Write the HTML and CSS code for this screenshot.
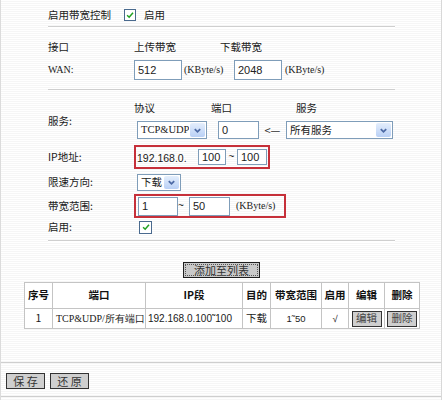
FILE: index.html
```html
<!DOCTYPE html>
<html>
<head>
<meta charset="utf-8">
<link rel="stylesheet" href="styles.css">
</head>
<body>
<div class="page">
  <div class="form">
    <div class="row r-enable">
      <span class="txt">启用带宽控制</span>
      <span class="chk chk-top"><svg viewBox="0 0 12 12" width="10" height="10"><path d="M2.5 6.2 L5 8.6 L9.6 3.2" fill="none" stroke="#21a121" stroke-width="1.8"/></svg></span>
      <span class="txt">启用</span>
    </div>
    <div class="sep s1"></div>
    <div class="row r-head">
      <span class="lbl">接口</span>
      <span class="txt c-up">上传带宽</span>
      <span class="txt">下载带宽</span>
    </div>
    <div class="row r-wan">
      <span class="lbl small">WAN:</span>
      <span class="inp w-bw">512</span>
      <span class="small unit">(KByte/s)</span>
      <span class="inp w-bw">2048</span>
      <span class="small unit2">(KByte/s)</span>
    </div>
    <div class="sep s2"></div>
    <div class="svc">
      <span class="lbl">服务:</span>
      <div class="svc-body">
        <div class="row r-phead">
          <span class="txt c-proto">协议</span>
          <span class="txt c-port">端口</span>
          <span class="txt">服务</span>
        </div>
        <div class="row r-psel">
          <div class="sel w-proto"><span class="sel-t serif">TCP&amp;UDP</span><span class="sel-b"><svg viewBox="0 0 10 10" width="9" height="9"><path d="M2 3.5 L5 6.5 L8 3.5" fill="none" stroke="#4d6aa5" stroke-width="2"/></svg></span></div>
          <span class="inp w-port">0</span>
          <span class="arrow">&lt;—</span>
          <div class="sel w-svc"><span class="sel-t">所有服务</span><span class="sel-b"><svg viewBox="0 0 10 10" width="9" height="9"><path d="M2 3.5 L5 6.5 L8 3.5" fill="none" stroke="#4d6aa5" stroke-width="2"/></svg></span></div>
        </div>
      </div>
    </div>
    <div class="row r-ip">
      <span class="lbl">IP地址:</span>
      <div class="redbox rb-ip">
        <span class="ipfix">192.168.0.</span>
        <span class="inp w-ip1">100</span>
        <span class="tilde">~</span>
        <span class="inp w-ip2">100</span>
      </div>
    </div>
    <div class="row r-dir">
      <span class="lbl">限速方向:</span>
      <div class="sel w-dir"><span class="sel-t">下载</span><span class="sel-b"><svg viewBox="0 0 10 10" width="9" height="9"><path d="M2 3.5 L5 6.5 L8 3.5" fill="none" stroke="#4d6aa5" stroke-width="2"/></svg></span></div>
    </div>
    <div class="row r-bw">
      <span class="lbl">带宽范围:</span>
      <div class="redbox rb-bw">
        <span class="inp w-r1">1</span>
        <span class="tilde2">~</span>
        <span class="inp w-r2">50</span>
        <span class="small unit3">(KByte/s)</span>
      </div>
    </div>
    <div class="row r-en">
      <span class="lbl">启用:</span>
      <span class="chk chk-en"><svg viewBox="0 0 12 12" width="10" height="10"><path d="M2.5 6.2 L5 8.6 L9.6 3.2" fill="none" stroke="#21a121" stroke-width="1.8"/></svg></span>
    </div>
    <div class="sep s3"></div>
  </div>
  <div class="addbar"><span class="btn-add">添加至列表</span></div>
  <table class="list">
    <colgroup>
      <col class="k1"><col class="k2"><col class="k3"><col class="k4"><col class="k5"><col class="k6"><col class="k7"><col class="k8">
    </colgroup>
    <tr class="hd">
      <th>序号</th><th>端口</th><th>IP段</th><th>目的</th><th>带宽范围</th><th>启用</th><th>编辑</th><th>删除</th>
    </tr>
    <tr class="dt">
      <td>1</td><td class="serif l">TCP&amp;UDP/所有端口</td><td class="ipc">192.168.0.100˜100</td><td>下载</td><td class="sm">1˜50</td><td class="sm">√</td><td><span class="tbtn">编辑</span></td><td><span class="tbtn">删除</span></td>
    </tr>
  </table>
  <div class="footer">
    <span class="fbtn">保 存</span>
    <span class="fbtn">还 原</span>
  </div>
</div>
</body>
</html>
```
FILE: styles.css
```css
* { box-sizing: border-box; }
html, body { margin: 0; padding: 0; }
body {
  font-family: "Noto Sans CJK SC", "Liberation Sans", sans-serif;
  font-size: 10.5px;
  color: #1a1a1a;
  line-height: 1;
}
.page {
  width: 442px;
  height: 400px;
  position: relative;
  background: repeating-linear-gradient(#ffffff 0, #ffffff 1px, #f6f6f6 1px, #f6f6f6 2px);
  border-left: 1px solid #dcdcdc;
  border-right: 1px solid #d8d8d8;
  overflow: hidden;
}
.form { padding: 6px 0 0 47px; }
.row { display: flex; align-items: center; }
.lbl { width: 86px; flex: none; }
.small { font-family: "Liberation Serif", serif; font-size: 10px; }
.serif { font-family: "Liberation Serif", serif; font-size: 10.5px; }
.r-enable { height: 18px; }
.chk {
  display: inline-flex; align-items: center; justify-content: center;
  width: 12px; height: 12px; background: #fff;
  border: 1px solid #4a6a8e;
}
.chk-top { margin: 0 8px 0 13px; }
.sep {
  width: 347px; height: 2px;
  border-top: 1px solid #cfcfcf; border-bottom: 1px solid #ffffff;
}
.s1 { margin-top: 2px; }
.r-head { margin-top: 10px; height: 18px; }
.c-up { width: 86px; }
.r-wan { margin-top: 3px; height: 22px; }
.inp {
  display: inline-flex; align-items: center;
  background: #fff; border: 1px solid #7f9db9;
  font-family: "Liberation Sans", sans-serif; font-size: 11px;
  padding-left: 3px; color: #222;
}
.w-bw { width: 48px; height: 20px; }
.unit { width: 52px; padding-left: 2px; }
.unit2 { padding-left: 3px; }
.s2 { margin-top: 8px; }
.svc { display: flex; align-items: center; margin-top: 8px; }
.svc .lbl { padding-top: 3px; }
.r-phead { height: 18px; }
.c-proto { width: 77px; }
.c-port { width: 85px; }
.r-psel { margin-top: 3px; height: 20px; }
.sel {
  display: flex; align-items: stretch;
  background: #fff; border: 1px solid #7f9db9; height: 18px;
}
.sel-t { flex: 1; display: flex; align-items: center; padding-left: 3px; white-space: nowrap; overflow: hidden; }
.sel-b {
  width: 15px; flex: none; margin: 1px;
  background: linear-gradient(#e4eefc, #b9d0f5);
  border-radius: 2px;
  display: flex; align-items: center; justify-content: center;
}
.w-proto { width: 70px; margin-left: 3px; }
.w-port { width: 41px; height: 18px; margin-left: 11px; }
.arrow { width: 27px; text-align: center; font-size: 11px; color: #333; }
.w-svc { width: 107px; }
.r-ip { margin-top: 5px; height: 24px; }
.redbox {
  display: flex; align-items: center; height: 24px;
  border: 2px solid #c6303a;
}
.rb-ip { width: 136px; padding-left: 1px; }
.ipfix { font-family: "Liberation Sans", sans-serif; font-size: 10.5px; width: 61px; padding-top: 2px; }
.w-ip1 { width: 28px; height: 16px; }
.tilde { width: 11px; text-align: center; font-family: "Liberation Sans", sans-serif; font-size: 10px; }
.w-ip2 { width: 30px; height: 16px; }
.r-dir { margin-top: 3px; height: 20px; }
.w-dir { width: 44px; height: 17px; margin-left: 3px; }
.r-bw { margin-top: 2px; height: 24px; }
.rb-bw { width: 152px; padding-left: 2px; }
.w-r1 { width: 40px; height: 19px; }
.tilde2 { width: 11px; font-size: 10px; font-family: "Liberation Sans", sans-serif; }
.w-r2 { width: 41px; height: 19px; }
.unit3 { padding-left: 6px; }
.r-en { margin-top: 1px; height: 16px; }
.chk-en { margin-left: 5px; width: 13px; height: 13px; }
.s3 { margin-top: 5px; }
.addbar { margin-top: 20px; padding-left: 182px; height: 16px; }
.btn-add {
  display: inline-flex; align-items: center; justify-content: center;
  width: 77px; height: 16px;
  background: #c9c9c9;
  border: 1px solid #1e1e1e;
  outline: 1px dotted #555; outline-offset: -3px;
  font-size: 11px; color: #333;
}
.list {
  margin-top: 4px; margin-left: 23px;
  width: 395px; border-collapse: collapse;
  table-layout: fixed; background: #fff;
}
.k1 { width: 28px; } .k2 { width: 93px; } .k3 { width: 97px; } .k4 { width: 28px; }
.k5 { width: 51px; } .k6 { width: 27px; } .k7 { width: 36px; } .k8 { width: 35px; }
.list th, .list td {
  border: 1px solid #c4c4c4; padding: 0; text-align: center;
  white-space: nowrap; overflow: hidden;
}
.list th { font-weight: bold; font-size: 10.5px; color: #111; }
.hd { height: 26px; }
.dt { height: 20px; }
.list td { font-size: 10.5px; }
.list td.l { text-align: left; padding-left: 3px; font-size: 10px; }
.list td.ipc { font-family: "Liberation Sans", sans-serif; font-size: 10px; text-align: left; padding-left: 2px; }
.list td.sm { font-family: "Liberation Sans", sans-serif; font-size: 9.5px; }
.tbtn {
  display: inline-flex; align-items: center; justify-content: center;
  width: 30px; height: 16px; background: #cfcfcf;
  border: 1px solid #333; font-size: 10.5px; color: #444;
}
.footer {
  margin-top: 33px; border-top: 1px solid #cfcfcf;
  padding: 10px 0 0 5px; display: flex; gap: 5px;
  height: 35px; border-bottom: 1px solid #cfcfcf;
}
.fbtn {
  display: inline-flex; align-items: center; justify-content: center;
  width: 39px; height: 16px; background: #cfcfcf;
  border: 1px solid #333; font-size: 11px; color: #333;
}
```
